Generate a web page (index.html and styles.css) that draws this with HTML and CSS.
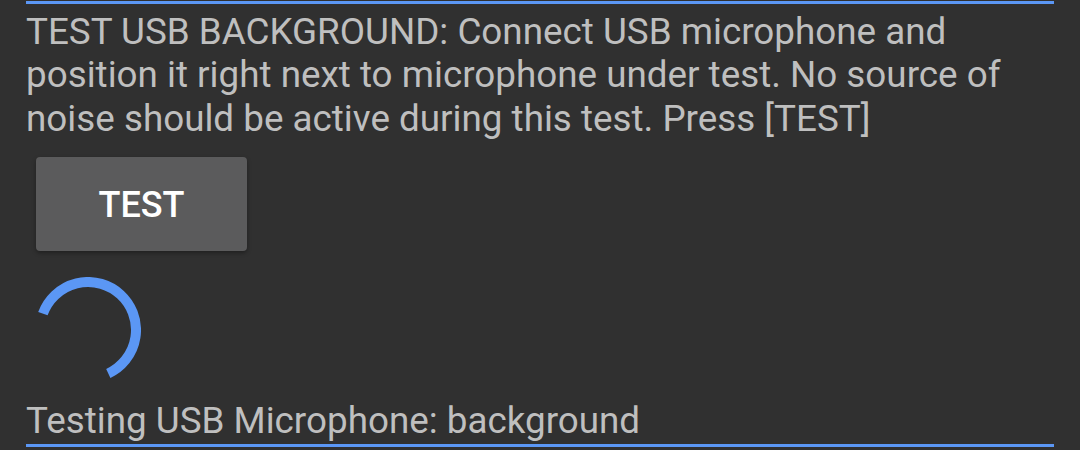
FILE: index.html
```html
<!DOCTYPE html>
<html lang="en">

<head>
    <meta charset="UTF-8">
    <meta name="viewport" content="width=device-width, initial-scale=1.0">
    <link rel="stylesheet" href="styles.css">
</head>

<body>
    <div class="screen">
        <div class="divider top"></div>
        <p class="instructions">TEST USB BACKGROUND: Connect USB microphone and position it right next to microphone under test. No source of noise should be active during this test. Press [TEST]</p>
        <button type="button" class="btn">TEST</button>
        <div class="spinner">
            <svg width="106" height="106" viewBox="0 0 106 106">
                <path d="M 7.9 36.6 A 48 48 0 1 1 73.3 96.5" fill="none" stroke="#5b97f5" stroke-width="10" />
            </svg>
        </div>
        <p class="status">Testing USB Microphone: background</p>
        <div class="divider"></div>
    </div>
</body>

</html>
```

FILE: styles.css
```css
/* page */
body {
    margin: 0;
    background-color: #303030;
    font-family: Roboto, "Noto Sans", sans-serif;
    color: #bfbfbf;
}

.screen {
    display: flex;
    flex-direction: column;
    align-items: flex-start;
    width: 1028px;
    padding: 1px 0 0 26px;
}

.divider {
    width: 100%;
    height: 3px;
    background-color: #5b97f5;
}

.instructions {
    margin: 6px 0 0;
    font-size: 36.8px;
    line-height: 43.3px;
}

.btn {
    margin: 17px 0 0 10px;
    padding: 3px 0 0;
    width: 211px;
    height: 94px;
    border: none;
    border-radius: 4px;
    background-color: #5b5b5c;
    color: #ffffff;
    font-family: Roboto, "Noto Sans", sans-serif;
    font-size: 36px;
    font-weight: 500;
    box-shadow: 0 2px 4px rgba(0, 0, 0, 0.35);
}

.spinner {
    margin: 26px 0 0 9px;
    height: 106px;
}

.spinner svg {
    display: block;
}

.status {
    margin: 16px 0 0;
    font-size: 36.8px;
    line-height: 43.3px;
}

.status + .divider {
    margin-top: 2px;
}
```
